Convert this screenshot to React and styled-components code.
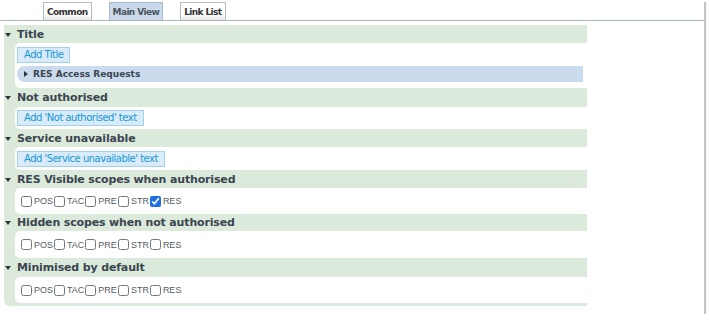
import styled, { createGlobalStyle } from "styled-components";

const Global = createGlobalStyle`
  html, body {
    margin: 0;
    padding: 0;
    background: #ffffff;
  }
`;

const Panel = styled.div`
  width: 704px;
  height: 314px;
  background: #ffffff;
  box-shadow: 2px 2px 1px #c4c4c4;
  font-family: "DejaVu Sans", Verdana, sans-serif;
  color: #3d4751;
`;

const TabStrip = styled.div`
  display: flex;
  gap: 17px;
  height: 21px;
  padding-left: 43px;
  box-sizing: border-box;
  border-bottom: 1px solid #a7b7c7;
  align-items: flex-end;
`;

const Tab = styled.div`
  height: 18px;
  box-sizing: border-box;
  padding: 0 3px;
  display: flex;
  align-items: center;
  border: 1px solid ${(p) => (p.$active ? "#a9bccf" : "#b7bcc2")};
  border-bottom: none;
  background: ${(p) =>
    p.$active ? "#c9d9e9" : "linear-gradient(#ffffff 65%, #e6e6e6)"};
  font-weight: bold;
  font-size: 9px;
  letter-spacing: -0.6px;
  color: ${(p) => (p.$active ? "#4a5560" : "#333333")};
`;

const Sections = styled.div`
  width: 583px;
  margin: 4px 0 0 4px;
  padding-bottom: 3px;
  background: #dceadc;
  border-bottom-left-radius: 6px;
`;

const Header = styled.div`
  height: ${(p) => p.$h || 18}px;
  display: flex;
  align-items: center;
  gap: 6px;
  padding-left: 1px;
  font-size: 11px;
  font-weight: bold;
  letter-spacing: -0.15px;
  color: #3b4550;
`;

const DownArrow = styled.span`
  width: 0;
  height: 0;
  border-left: 3.5px solid transparent;
  border-right: 3.5px solid transparent;
  border-top: 4px solid #2f3740;
  margin-top: 1px;
`;

const RightArrow = styled.span`
  width: 0;
  height: 0;
  border-top: 3.5px solid transparent;
  border-bottom: 3.5px solid transparent;
  border-left: 4px solid #2f3740;
`;

const Body = styled.div`
  margin-left: 11px;
  background: #ffffff;
  border-radius: 5px 0 0 5px;
  display: flex;
  flex-direction: column;
  gap: 3px;
  padding: ${(p) => p.$pad || "3px 0 3px 2px"};
`;

const AddButton = styled.button`
  align-self: flex-start;
  height: 16px;
  box-sizing: border-box;
  padding: 0 6px;
  margin: 0;
  background: #d7ebf8;
  border: 1px solid #a5d0ec;
  font-family: "DejaVu Sans", Verdana, sans-serif;
  font-size: 10px;
  letter-spacing: -0.5px;
  color: #1a97d5;
  line-height: 14px;
  cursor: pointer;
`;

const SubBar = styled.div`
  height: 16px;
  margin-right: 4px;
  display: flex;
  align-items: center;
  gap: 5px;
  padding-left: 7px;
  background: #c9dbec;
  border-radius: 8px 0 0 8px;
  font-size: 9px;
  font-weight: bold;
  color: #3b4550;
`;

const Scopes = styled.div`
  height: ${(p) => p.$h || 26}px;
  display: flex;
  align-items: center;
  padding-left: 6px;
  font-family: "Liberation Sans", Arial, sans-serif;
  font-size: 9px;
  color: #555b62;
`;

const Scope = styled.label`
  display: flex;
  align-items: center;
  margin-right: 1px;
`;

const Box = styled.input`
  width: 11px;
  height: 11px;
  margin: 0 2px 0 0;
  accent-color: #1f6fe0;
`;

const SCOPES = ["POS", "TAC", "PRE", "STR", "RES"];

const Section = ({ title, h, children }) => (
  <>
    <Header $h={h}>
      <DownArrow />
      {title}
    </Header>
    {children}
  </>
);

const ScopeRow = ({ checked = [], h }) => (
  <Body $pad="0">
    <Scopes $h={h}>
      {SCOPES.map((s) => (
        <Scope key={s}>
          <Box type="checkbox" defaultChecked={checked.includes(s)} />
          {s}
        </Scope>
      ))}
    </Scopes>
  </Body>
);

export default function App() {
  return (
    <>
      <Global />
      <Panel>
        <TabStrip>
          <Tab>Common</Tab>
          <Tab $active>Main View</Tab>
          <Tab>Link List</Tab>
        </TabStrip>
        <Sections>
          <Section title="Title">
            <Body $pad="4px 0 6px 2px">
              <AddButton>Add Title</AddButton>
              <SubBar>
                <RightArrow />
                RES Access Requests
              </SubBar>
            </Body>
          </Section>
          <Section title="Not authorised" h={19}>
            <Body>
              <AddButton>Add 'Not authorised' text</AddButton>
            </Body>
          </Section>
          <Section title="Service unavailable">
            <Body $pad="4px 0 3px 2px">
              <AddButton>Add 'Service unavailable' text</AddButton>
            </Body>
          </Section>
          <Section title="RES Visible scopes when authorised">
            <ScopeRow checked={["RES"]} />
          </Section>
          <Section title="Hidden scopes when not authorised" h={17}>
            <ScopeRow h={27} />
          </Section>
          <Section title="Minimised by default" h={19}>
            <ScopeRow />
          </Section>
        </Sections>
      </Panel>
    </>
  );
}
